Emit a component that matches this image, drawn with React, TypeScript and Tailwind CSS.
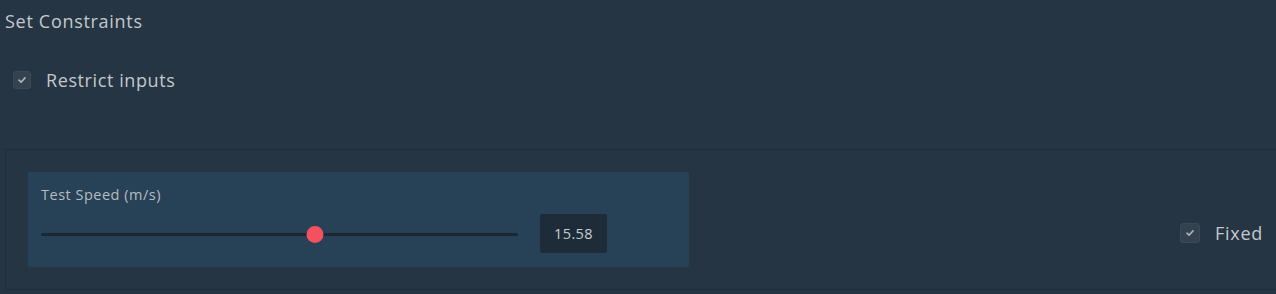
import React, { useState } from "react";

const font = { fontFamily: "'Open Sans', 'Noto Sans', sans-serif" };

function Check({ size = 18 }: { size?: number }) {
  return (
    <span
      className="flex items-center justify-center rounded-[3px] bg-[#34414e] border border-[#3c4855]"
      style={{ width: size, height: size }}
    >
      <svg width="10" height="10" viewBox="0 0 10 10" fill="none">
        <path d="M2 5.2 L4.1 7.2 L8 2.9" stroke="#aeb5bc" strokeWidth="1.6" strokeLinecap="round" strokeLinejoin="round" />
      </svg>
    </span>
  );
}

export default function App() {
  const [value] = useState(15.58);
  const pct = 57.4;

  return (
    <div className="h-[294px] w-full overflow-hidden bg-[#253543] text-[#c3c8cd]" style={font}>
      <div className="pl-[5px] pt-[9px] text-[18px] leading-[24px] tracking-[0.7px]">Set Constraints</div>

      <div className="mt-[35px] flex items-center gap-[15px] pl-[13px]">
        <Check />
        <span className="text-[18px] leading-[24px] tracking-[0.6px]">Restrict inputs</span>
      </div>

      <div className="ml-[5px] mt-[57px] h-[141px] border border-r-0 border-[#1f2d39] pl-[22px] pt-[22px]">
        <div className="flex items-center">
          <div className="h-[95px] w-[661px] rounded-[2px] bg-[#274156] pl-[13px] pt-[13px]">
            <div className="text-[14.5px] leading-[20px] tracking-[0.5px] text-[#b6bcc2]">Test Speed (m/s)</div>
            <div className="mt-[9px] flex items-center">
              <div className="relative h-[16px] w-[477px]">
                <div className="absolute left-0 right-0 top-[7px] h-[3px] rounded-full bg-[#1b2834]" />
                <div
                  className="absolute top-0 h-[17px] w-[17px] -translate-x-1/2 rounded-full bg-[#f4505f]"
                  style={{ left: `${pct}%` }}
                />
              </div>
              <div className="ml-[22px] flex h-[39px] w-[67px] items-center justify-center rounded-[2px] bg-[#1e2c39] text-[14.5px] tracking-[0.4px] text-[#c8cdd2]">
                {value.toFixed(2)}
              </div>
            </div>
          </div>
          <div className="ml-auto mr-[13px] mt-[26px] flex items-center gap-[15px]">
            <Check size={20} />
            <span className="text-[18px] leading-[24px] tracking-[0.7px]">Fixed</span>
          </div>
        </div>
      </div>
    </div>
  );
}
